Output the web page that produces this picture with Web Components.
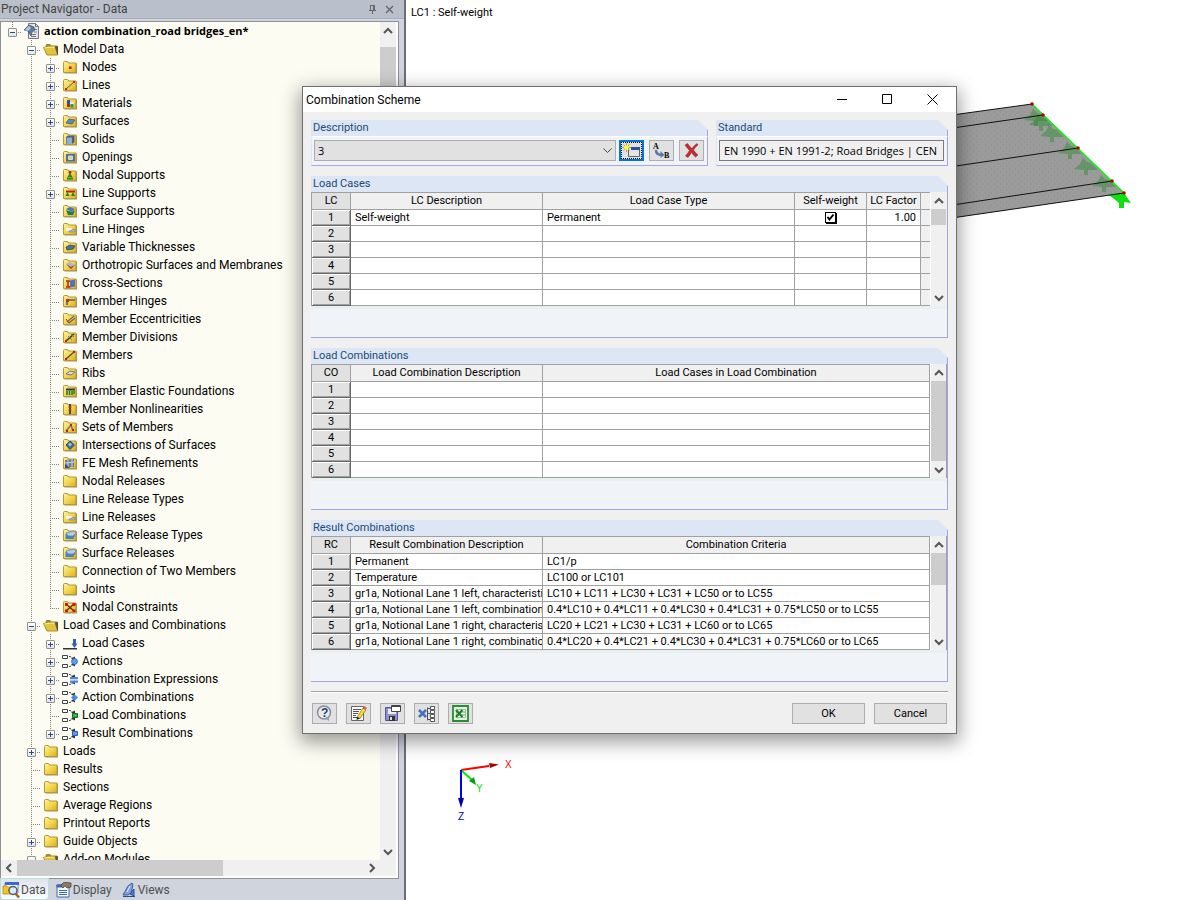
<!DOCTYPE html>
<html lang="en">
<head>
<meta charset="utf-8">
<title>Combination Scheme</title>
<style>
html, body { height: 100%; margin: 0; }
body { font: 12px/16px Roboto, "Liberation Sans", sans-serif; color: #000; background: #fff; overflow: hidden; }
</style>
</head>
<body>
<app-shell></app-shell>
<script>
const define = (name, html, setup) => customElements.define(name, class extends HTMLElement {
  connectedCallback() {
    if (this.shadowRoot) return;
    const root = this.attachShadow({ mode: 'open' });
    root.innerHTML = typeof html === 'function' ? html(this) : html;
    if (setup) setup(this, root);
  }
});

/* ---------- tree icons ---------- */
const folder = `<defs><linearGradient id="f" x1="0" y1="0" x2="1" y2="1"><stop offset="0" stop-color="#fff3a0"/><stop offset=".5" stop-color="#f3d74e"/><stop offset="1" stop-color="#dcae1a"/></linearGradient></defs>
<path d="M1.500 3.500q0-1 1-1h3l1 1.500h7.500v10h-12.500z" fill="#5f5836" opacity=".65" transform="translate(1 .6)"/>
<path d="M1.500 3.500q0-1 1-1h3l1 1.500h7.500v9.500h-12.500z" fill="url(#f)" stroke="#b4983a" stroke-width="1"/>`;
const combo = `<path d="M.5 2.500h5v3h-5zM.5 11.500h5v3h-5z" fill="#fff" stroke="#444"/><path d="M7 3.500q3 0 4 2.500M7 13.500q3 0 4-2.500" fill="none" stroke="#444" stroke-dasharray="2 1"/><path d="M9 5.500l4 2V3.500zM9 11.500l4-2v4z" fill="#333"/>`;
const over = {
  plain: '',
  node: '<rect x="7" y="7.500" width="2.500" height="2.500" fill="#d01010"/>',
  line: '<path d="M4 12l8-7" stroke="#555"/><path d="M3 11h2v2H3zM11 4h2v2h-2z" fill="#d02010"/>',
  material: '<path d="M5 5h3v4H5z" fill="#3050b0"/><path d="M8 7h4v3H8z" fill="#e8e8f0"/><path d="M5 9h3v3H5z" fill="#c02020"/><path d="M8.500 9h3v3.500h-3z" fill="#20a040"/>',
  surface: '<path d="M4 10l3-4 6 1-3 4z" fill="#5d86c4" stroke="#35507a" stroke-width=".7"/>',
  solid: '<path d="M4 6l2-1.500h6.500V11L10 13H4z" fill="#47617f"/><path d="M4.500 6.500H10V13H4.500z" fill="#8fadd0"/>',
  opening: '<path d="M4 5h9v7.500H4z" fill="#4e6e9e"/><path d="M6.500 7h4v3.500h-4z" fill="#f2d65a" stroke="#c8d8ee"/>',
  nsup: '<circle cx="8" cy="5.500" r="1.400" fill="#d01010"/><path d="M8 6l2.500 4h-5zM5 10.500h6v2H5z" fill="#188a28"/>',
  lsup: '<path d="M4 6.500h9" stroke="#c02010" stroke-width="2"/><path d="M5.500 7l2 4h-4zM11 7l2 4H9z" fill="#188a28"/>',
  ssup: '<path d="M4 6l4-2 5 2-3 3z" fill="#4d76b4"/><path d="M4 7l6 2 3-2-2 5H6z" fill="#188050"/>',
  hinge: '<path d="M4 7h6l-1 3H4z" fill="#f4f4f8"/><path d="M7 10l6-2v3H7z" fill="#a8b4c8" stroke="#777" stroke-width=".5"/>',
  thick: '<path d="M4 8l4-2 5 1-2 3-6 1z" fill="#4c6f9c" stroke="#263c58" stroke-width=".7"/>',
  ortho: '<path d="M4 7l4-2 5 3-4 2z" fill="#a7b6dc"/><path d="M4 7l5 3 4-2-4 4z" fill="#a03048"/>',
  cross: '<path d="M8 5.500l5-1v7l-5 1z" fill="#5170c4"/><path d="M4 6h4M6 6v6M4 12h4" stroke="#c02020" stroke-width="1.500"/>',
  mhinge: '<path d="M5 12V7h8" stroke="#777" stroke-width="2" fill="none"/><path d="M4 6h3v3H4z" fill="#c03020"/>',
  ecc: '<path d="M5 11l7-6M7 12l6-5" stroke="#667" stroke-width="1.200"/><path d="M4 8l3 4" stroke="#c03020"/>',
  div: '<path d="M4 12l8-7" stroke="#333" stroke-width="1.600"/><path d="M6 7l4 4M9 5l3 3" stroke="#777"/><path d="M3 11h2v2H3z" fill="#c02010"/>',
  member: '<path d="M4 12l8-7" stroke="#555" stroke-width="1.500"/><path d="M3 11h2v2H3zM11 4h2v2h-2z" fill="#c02010"/>',
  rib: '<path d="M4 9l4-3 5 1-4 3z" fill="#d9d9d9" stroke="#777"/>',
  elastic: '<path d="M4 6.500h9" stroke="#334" stroke-width="2"/><path d="M5 8v4M7.500 8v4M10 8v4M12 8v3" stroke="#108030" stroke-width="1.500"/>',
  nonlin: '<path d="M8 3v10" stroke="#444" stroke-width="2"/><path d="M6.500 6h3M6.500 9h3" stroke="#c04020" stroke-width="1.500"/>',
  sets: '<path d="M4 12l5-6 2 6" stroke="#777" stroke-width="1.500" fill="none"/><path d="M4 11h2v2H4zM8 5h2v2H8zM10 10h2v2h-2z" fill="#c02010"/>',
  inter: '<path d="M8 4l4.500 4-4.500 4.500L4 8z" fill="#3f6aa4" stroke="#2c4a70"/><path d="M8 5.500l2 2-2 2-2-2z" fill="#8fd0d8"/>',
  mesh: '<path d="M3 5l9-1v8H4z" fill="#667c94"/><path d="M4 8l8-1M6 5v8M10 4v8" stroke="#cdd8e4"/><path d="M3 9l5 4H3z" fill="#334c88"/>',
  srel: '<path d="M3.500 7h10l-2 5h-8z" fill="#3f88c8"/><path d="M4 6l8-2 2 2-3 3-5 0z" fill="#b8cce6" stroke="#5b7ca6" stroke-width=".7"/>',
  cons: '<path d="M4 5l8 7M12 5l-8 7" stroke="#522" stroke-width="1.200"/><path d="M3 4h3v3H3zM10.500 4h3v3h-3zM3 10.500h3v2.500H3zM10.500 10.500h3v2.500h-3z" fill="#d01818"/>'
};
const special = {
  open: '<path d="M2.500 5q0-2 1.500-2h3l1.500 1.500H14v8.500H3z" fill="#9c8a3c"/><path d="M.5 6.500q4-1.500 11.500-1l2.500 8.500H4z" fill="#e0c440" stroke="#b09020"/><path d="M1.500 7q4-1.200 10-.8" stroke="#fff0a0" fill="none"/><path d="M12 5.500L14.500 14H15V5z" fill="#5e5632"/>',
  model: '<path d="M4.500.5h7l3 3v12h-10z" fill="#e4e8ec" stroke="#777"/><path d="M11.500.5v3h3M7 11.500h5M7 13.500h5M10 9h3M11 6.500h2" stroke="#777" fill="none"/><path d="M0 7l5-5 5 2 1 3-3 2-1 4-3-5z" fill="#5d7ba4" stroke="#2d4668" stroke-width=".6"/><path d="M1 7l4-4 2 2-3 3z" fill="#b8cce2"/>',
  lcase: '<path d="M1 13.500h14" stroke="#333"/><path d="M1 14.500h14" stroke="#999"/><path d="M11 4h3v6h-3z" fill="#2f62c0"/><path d="M9.500 8.500h6l-3 4.500z" fill="#2f62c0"/>',
  act: combo + '<circle cx="12.500" cy="8.500" r="3" fill="#5d9af0" stroke="#2c5cb0" stroke-width=".7"/>',
  expr: combo + '<path d="M8 6h8v2.200H8zM8 9.500h8v2.200H8z" fill="#4a88e8"/>',
  acomb: combo + '<path d="M12.500 5l3.500 3.500-3.500 3.500L9 8.500z" fill="#4a88e8"/>',
  lcomb: combo + '<path d="M10.500 6.500h5v4h-5z" fill="#20c040" stroke="#107020"/>',
  rcomb: combo + '<path d="M10.500 6.500h5v4h-5z" fill="#5d9af0" stroke="#2c5cb0"/>'
};
const treeIcon = k => `<svg width="16" height="16" viewBox="0 0 16 16" aria-hidden="true">${special[k] || folder + over[k]}</svg>`;

/* ---------- tree ---------- */
define('tree-row', el => {
  const state = el.getAttribute('state');
  const guides = [...(el.getAttribute('guides') || '')].map(g => `<i class="cell ${g === '|' ? 'line' : ''}"></i>`).join('');
  const btn = state === '-' || state === '+'
    ? `<button aria-label="${state === '+' ? 'Expand' : 'Collapse'}"><svg width="7" height="7" viewBox="0 0 7 7"><path d="M1 3.500h5${state === '+' ? 'M3.500 1v5' : ''}" stroke="#2b4a94" stroke-width="1"/></svg></button>` : '';
  return `<style>
:host { display: flex; height: 18px; align-items: stretch; white-space: nowrap; }
:host([bold]) { font: 700 11px/16px "Open Sans", "Noto Sans", sans-serif; }
.cell { flex: none; width: 19px; display: flex; align-items: flex-start; justify-content: center; --dots: repeating-linear-gradient(to bottom, #808080 0 1px, transparent 1px 2px); }
.line { background: var(--dots) 9px 0 / 1px 100% no-repeat; }
.knot { background: var(--dots) 9px 0 / 1px 100% no-repeat, repeating-linear-gradient(to right, #808080 0 1px, transparent 1px 2px) 9px 10px / 10px 1px no-repeat; }
.knot.last { background-size: 1px 10px, 10px 1px; }
button { flex: none; width: 9px; height: 9px; box-sizing: border-box; margin: 6px 0 0; padding: 0; border: 1px solid #919191; border-radius: 1px; background: linear-gradient(#fff, #e4e4e4); display: grid; }
.icon { flex: none; box-sizing: border-box; width: 22px; padding-left: 2px; display: grid; place-items: center start; }
.text { line-height: 18px; }
</style>${guides}<span class="cell knot ${el.hasAttribute('last') ? 'last' : ''}">${btn}</span><span class="icon">${treeIcon(el.getAttribute('icon'))}</span><span class="text"><slot></slot></span>`;
}, el => el.setAttribute('role', 'treeitem'));

const second = `Nodes,node,+;Lines,line,+;Materials,material,+;Surfaces,surface,+;Solids,solid;Openings,opening;Nodal Supports,nsup;Line Supports,lsup,+;Surface Supports,ssup;Line Hinges,hinge;Variable Thicknesses,thick;Orthotropic Surfaces and Membranes,ortho;Cross-Sections,cross;Member Hinges,mhinge;Member Eccentricities,ecc;Member Divisions,div;Members,member;Ribs,rib;Member Elastic Foundations,elastic;Member Nonlinearities,nonlin;Sets of Members,sets;Intersections of Surfaces,inter;FE Mesh Refinements,mesh;Nodal Releases,plain;Line Release Types,plain;Line Releases,hinge;Surface Release Types,srel;Surface Releases,srel;Connection of Two Members,plain;Joints,plain;Nodal Constraints,cons`;
const loads = `Load Cases,lcase,+;Actions,act,+;Combination Expressions,expr,+;Action Combinations,acomb,+;Load Combinations,lcomb;Result Combinations,rcomb,+`;
const rest = `Loads,plain,+;Results,plain;Sections,plain;Average Regions,plain;Printout Reports,plain;Guide Objects,plain,+;Add-on Modules,open,-`;
const rows = (data, guides) => data.split(';').map((r, i, all) => {
  const [t, icon, s = ''] = r.split(',');
  return `<tree-row guides="${guides}" icon="${icon}" state="${s}" ${i === all.length - 1 && guides.length > 1 ? 'last' : ''}>${t}</tree-row>`;
}).join('');
define('project-tree', `<style>
:host { display: block; overflow: hidden; background: #fcfcf3; padding-left: 2px; }
</style>
<tree-row guides="" icon="model" state="-" bold last>action combination_road bridges_en*</tree-row>
<tree-row guides=" " icon="open" state="-">Model Data</tree-row>${rows(second, ' |').replaceAll('guides=" |"', 'guides="_|"').replaceAll('guides="_|"', 'guides=" |"')}
<tree-row guides=" " icon="open" state="-">Load Cases and Combinations</tree-row>${rows(loads, ' |')}${rows(rest, ' ')}`, el => el.setAttribute('role', 'tree'));

/* ---------- scroll bar ---------- */
define('scroll-bar', `<style>
:host { display: flex; flex-direction: column; background: #f0f0f0; --before: 0; --thumb: 1; --after: 0; }
:host([horizontal]) { flex-direction: row; }
button { flex: none; width: 16px; height: 17px; padding: 0; border: 0; background: none; display: grid; place-items: center; }
:host([horizontal]) button { width: 16px; height: 16px; }
:host([horizontal]) svg { transform: rotate(-90deg); }
.a { flex: var(--before) 1 0; } .t { flex: var(--thumb) 1 0; background: #cdcdcd; } .b { flex: var(--after) 1 0; }
svg { fill: none; stroke: #555; stroke-width: 2; }
</style><button aria-label="Scroll back"><svg width="10" height="8" viewBox="0 0 10 8"><path d="M1 6l4-4 4 4"/></svg></button><span class="a"></span><span class="t"></span><span class="b"></span><button aria-label="Scroll forward"><svg width="10" height="8" viewBox="0 0 10 8"><path d="M1 2l4 4 4-4"/></svg></button>`);

/* ---------- navigator ---------- */
define('project-navigator', `<style>
:host { display: flex; flex-direction: column; box-sizing: border-box; background: #cfd4dd; border-right: 2px solid #6c6f76; color: #444; }
header { display: flex; align-items: center; height: 18px; background: #b9c0cb; border-bottom: 1px solid #a9b0bc; padding: 0 6px 0 1px; margin-bottom: 2px; }
h1 { flex: 1; font: inherit; margin: 0; line-height: 16px; }
header button { border: 0; background: none; padding: 0; width: 16px; height: 16px; display: grid; place-items: center; margin-right: 1px; }
.frame { flex: 1; min-height: 0; display: grid; grid-template: minmax(0, 1fr) 16px / minmax(0, 1fr) 16px; margin-right: 5px; padding: 0 2px 2px 0; background: #fff; border: 1px solid #8c8f96; }
project-tree { color: #000; }
.v { --before: 1; --thumb: 80; --after: 14; } .h { --thumb: 205; --after: 140; }
.corner { background: #f0f0f0; }
nav { display: flex; height: 21px; align-items: flex-start; gap: 6px; padding-left: 1px; }
nav button { font: inherit; color: #505050; height: 20px; display: flex; align-items: center; gap: 1px; padding: 1px 2px 0 1px; border: 0; background: none; }
nav button[aria-selected=true] { background: linear-gradient(#e0e4ea, #fafcfd); box-shadow: 0 0 0 1px #b9dfe6; border-radius: 0 0 3px 3px; }
</style>
<header><h1>Project Navigator - Data</h1>
<button aria-label="Pin"><svg width="9" height="10" viewBox="0 0 9 10" fill="none" stroke="#666"><path d="M2.500 1v5M1 6.500h7M6.500 1v5M2 1.500h5M5.500 1v5M4.500 7v3"/></svg></button>
<button aria-label="Close"><svg width="9" height="9" viewBox="0 0 9 9" fill="none" stroke="#666" stroke-width="1.400"><path d="M1 1l7 7M8 1l-7 7"/></svg></button></header>
<div class="frame"><project-tree></project-tree><scroll-bar class="v"></scroll-bar><scroll-bar class="h" horizontal></scroll-bar><span class="corner"></span></div>
<nav role="tablist">
<button role="tab" aria-selected="true"><svg width="18" height="18" viewBox="0 0 18 18"><path d="M3 2h13v10H3z" fill="#fff" stroke="#6d8fd8"/><path d="M3 1h14v3H3z" fill="#3a6ad8"/><path d="M1 5h4l1 1h3v7H1z" fill="#f3c81e" stroke="#a8801c" stroke-width=".7"/><circle cx="11" cy="9.500" r="4" fill="#d9ecfa" stroke="#505a68" stroke-width="1.500"/><path d="M13.500 12.500l3.500 4" stroke="#a86020" stroke-width="2.500"/></svg>Data</button>
<button role="tab" aria-selected="false"><svg width="17" height="18" viewBox="0 0 17 18"><path d="M2 4h12v12H2z" fill="#f6f8fc" stroke="#3d68b8"/><path d="M1.500 3.500h6v3h-6z" fill="#3d68b8"/><path d="M4 9.500h8M4 11.500h8M4 13.500h8" stroke="#3d68b8"/><path d="M6 5q1-4 5-3.500L16 2v4l-4 1-2-2-2 2z" fill="#8a7a68" stroke="#443a30" stroke-width=".7"/></svg>Display</button>
<button role="tab" aria-selected="false"><svg width="16" height="18" viewBox="0 0 16 18"><path d="M2 15.500h12M9 13l4-5v7z" fill="#5b80cc" stroke="#2a4a94"/><path d="M2 14l5-9 4-3 1 2-2 8-3 2z" fill="#7ea2e4" stroke="#27458c" stroke-width=".8"/><path d="M6 11l3-6" stroke="#e4eefc"/></svg>Views</button>
</nav>`);

/* ---------- dialog parts ---------- */
define('group-panel', `<style>
:host { display: flex; flex-direction: column; font-size: 11px; }
.head { height: 16px; padding-left: 2px; background: #dce6f4; color: #1d4a78; border-right: 1px solid #a5a5e8; clip-path: polygon(0 0, calc(100% - 10px) 0, 100% 10px, 100% 100%, 0 100%); line-height: 16px; }
.body { flex: 1; border: solid #a5a5e8; border-width: 0 1px 1px 0; background: #f0f4f8; }
:host([form]) .body { border-top: 1px solid #fff; border-left: 1px solid #dce6f4; padding: 3px 3px 4px 2px; display: flex; gap: 5px; align-items: center; }
</style><div class="head"><slot name="title"></slot></div><div class="body"><slot></slot></div>`);

define('tool-button', el => `<style>
:host { display: inline-flex; }
button { width: 25px; height: 21px; box-sizing: border-box; padding: 0; border: 1px solid #adadad; background: #e1e1e1; display: grid; place-items: center; }
:host([focused]) button { border: 2px solid #0078d7; outline: 1px dotted #000; outline-offset: -3px; }
</style><button aria-label="${el.getAttribute('label')}"><slot></slot></button>`);

define('push-button', `<style>
:host { display: inline-flex; width: 73px; }
button { flex: 1; height: 21px; box-sizing: border-box; padding: 0; border: 1px solid #adadad; background: #e1e1e1; font: 11px/16px Roboto, "Liberation Sans", sans-serif; }
</style><button><slot></slot></button>`);

const grids = {
  LC: { cols: [['LC', 39], ['LC Description', 192], ['Load Case Type', 0], ['Self-weight', 72], ['LC Factor', 54], ['', 9]],
    rows: [['Self-weight', 'Permanent', '@', '1.00', '']], bar: '--thumb:16;--after:64' },
  CO: { cols: [['CO', 39], ['Load Combination Description', 192], ['Load Cases in Load Combination', 0]], rows: [], bar: '' },
  RC: { cols: [['RC', 39], ['Result Combination Description', 192], ['Combination Criteria', 0]],
    rows: [['Permanent', 'LC1/p'], ['Temperature', 'LC100 or LC101'],
      ['gr1a, Notional Lane 1 left, characteristi', 'LC10 + LC11 + LC30 + LC31 + LC50 or to LC55'],
      ['gr1a, Notional Lane 1 left, combination', '0.4*LC10 + 0.4*LC11 + 0.4*LC30 + 0.4*LC31 + 0.75*LC50 or to LC55'],
      ['gr1a, Notional Lane 1 right, characteris', 'LC20 + LC21 + LC30 + LC31 + LC60 or to LC65'],
      ['gr1a, Notional Lane 1 right, combinatio', '0.4*LC20 + 0.4*LC21 + 0.4*LC30 + 0.4*LC31 + 0.75*LC60 or to LC65']], bar: '--thumb:32;--after:48' }
};
define('data-grid', el => {
  const g = grids[el.getAttribute('kind')];
  const cell = (v, i) => v === '@' ? '<td class="tick"><label><input type="checkbox" checked aria-label="Self-weight"><svg width="11" height="11" viewBox="0 0 11 11"><path d="M2.500 5l2 2.500 4-5" fill="none" stroke="#000" stroke-width="2"/></svg></label></td>'
    : `<td${v === '1.00' ? ' class="num"' : g.cols[i + 1][1] === 9 ? ' class="stub"' : ''}>${v}</td>`;
  return `<style>
:host { display: grid; grid-template-columns: minmax(0, 1fr) auto; background: #f0f0f0; border-bottom: 3px solid #e8f0f0; }
table { width: 100%; table-layout: fixed; border-collapse: separate; border-spacing: 0; border: solid #a0a0a0; border-width: 1px 0 0 1px; background: #fff; }
th, td { box-sizing: border-box; height: 16px; padding: 0; border: solid #a0a0a0; border-width: 0 1px 1px 0; font-weight: 400; line-height: 14px; white-space: nowrap; overflow: hidden; }
thead th { height: 17px; background: #f0f0f0; line-height: 15px; vertical-align: top; }
thead th:first-child { background: #e1e1e1; }
td { padding: 1px 0 0 4px; }
tbody th { background: #e1e1e1; border-color: #696969; box-shadow: inset 1px 1px #fff, inset -1px -1px #a0a0a0; }
.num { text-align: right; padding-right: 4px; }
.stub { background: #f0f0f0; border-right: 0; }
.tick { padding: 0; text-align: center; }
.tick label { display: inline-grid; vertical-align: top; margin-top: 1px; }
.tick input, .tick svg { grid-area: 1 / 1; }
.tick svg { pointer-events: none; }
input { appearance: none; width: 11px; height: 11px; box-sizing: border-box; margin: 0; border: 1px solid #000; box-shadow: 1px 1px #000; background: #fff; }
scroll-bar { width: 15px; border-left: 1px solid #fff; border-right: 1px solid ${el.getAttribute('kind') === 'LC' ? '#f0f0f0' : '#a0a0a0'}; box-sizing: border-box; width: 17px; ${g.bar} }
</style><table><colgroup>${g.cols.map(c => `<col${c[1] ? ` style="width:${c[1]}px"` : ''}>`).join('')}</colgroup>
<thead><tr>${g.cols.map(c => `<th scope="col"${c[1] === 9 ? ' class="stub"' : ''}>${c[0]}</th>`).join('')}</tr></thead>
<tbody>${[0, 1, 2, 3, 4, 5].map(n => `<tr><th scope="row">${n + 1}</th>${(g.rows[n] || g.cols.slice(1).map(() => '')).map(cell).join('')}</tr>`).join('')}</tbody></table><scroll-bar></scroll-bar>`;
});

define('scheme-dialog', `<style>
:host { display: block; box-sizing: border-box; border: 1px solid #707070; background: #f0f0f0; box-shadow: 0 6px 18px 2px rgba(0,0,0,.4); }
header { display: flex; align-items: center; height: 25px; padding: 0 1px 0 3px; background: #fff; }
h2 { flex: 1; margin: 0; font: inherit; }
header button { width: 45px; height: 25px; padding: 0; border: 0; background: none; display: grid; place-items: center; }
header svg { fill: none; stroke: #000; }
form { padding: 8px 8px 9px; display: flex; flex-direction: column; }
.top { display: flex; gap: 8px; margin-bottom: 10px; }
.top group-panel:first-child { flex: 1; } .top group-panel:last-child { width: 232px; }
.pick { flex: 1; display: grid; margin-right: -2px; }
.pick > * { grid-area: 1 / 1; }
.pick svg { justify-self: end; align-self: center; margin-right: 4px; pointer-events: none; }
select, input { height: 21px; box-sizing: border-box; margin: 0; border: 1px solid #adadad; border-radius: 0; background: #e1e1e1; appearance: none; font: 11px/16px "Open Sans", "Noto Sans", sans-serif; padding: 0 3px; color: #000; }
input { flex: 1; min-width: 0; background: #f0f0f0; border-color: #7a7a7a; padding-left: 4px; }
.grid { margin-bottom: 10px; }
.grid.last { margin-bottom: 9px; }
.space { height: 28px; }
footer { border-top: 1px solid #a0a0a0; box-shadow: inset 0 1px #fff; padding: 11px 1px 0; display: flex; gap: 9px; }
footer i { flex: 1; }
</style>
<header><h2>Combination Scheme</h2>
<button aria-label="Minimize"><svg width="11" height="11" viewBox="0 0 11 11"><path d="M0 5.500h10"/></svg></button>
<button aria-label="Maximize"><svg width="11" height="11" viewBox="0 0 11 11"><path d="M.5.5h9v9h-9z"/></svg></button>
<button aria-label="Close"><svg width="11" height="11" viewBox="0 0 11 11"><path d="M.5.5l10 10M10.500.5l-10 10"/></svg></button></header>
<form onsubmit="return false">
<div class="top">
<group-panel form><label slot="title" for="desc">Description</label>
<span class="pick"><select id="desc"><option>3</option></select><svg width="9" height="6" viewBox="0 0 9 6" fill="none" stroke="#444"><path d="M.5.5l4 4 4-4"/></svg></span>
<tool-button label="New" focused><svg width="19" height="15" viewBox="0 0 19 15"><path d="M6.500 4.500h11v9h-11z" fill="#e4e4e4" stroke="#666"/><path d="M9 4h9v3H9z" fill="#2f4f98"/><path d="M4.500 0v9M0 4.500h9M1.500 1.500l6 6M7.500 1.500l-6 6" stroke="#b8b010"/><circle cx="4.500" cy="4.500" r="2.200" fill="#ffff50"/></svg></tool-button>
<tool-button label="Rename"><svg width="19" height="17" viewBox="0 0 19 17"><text x="1" y="7" font-family="Liberation Serif" font-weight="700" font-size="8">A</text><text x="12" y="16" font-family="Liberation Serif" font-weight="700" font-size="8">B</text><path d="M4 8q0 5 6 5" fill="none" stroke="#5a78ac" stroke-width="2.500"/><path d="M8.500 9l4 4-4 3z" fill="#5a78ac"/></svg></tool-button>
<tool-button label="Delete"><svg width="15" height="15" viewBox="0 0 15 15"><path d="M1 2l2.500-1.500Q6 4 8 5.500 10 2.500 13 .5L14 2q-3 2-4.500 5 2 3 4.500 5l-2.500 2Q9 12 7.500 9.500 6 12 4 14.500L1.500 13Q4 10 5.500 7.500 3 5 1 2z" fill="#c8282c" stroke="#8a3a3c" stroke-width=".6"/></svg></tool-button>
</group-panel>
<group-panel form><label slot="title" for="std">Standard</label><input id="std" readonly value="EN 1990 + EN 1991-2; Road Bridges | CEN"></group-panel>
</div>
<group-panel class="grid"><span slot="title">Load Cases</span><data-grid kind="LC"></data-grid><div class="space"></div></group-panel>
<group-panel class="grid"><span slot="title">Load Combinations</span><data-grid kind="CO"></data-grid><div class="space"></div></group-panel>
<group-panel class="grid last"><span slot="title">Result Combinations</span><data-grid kind="RC"></data-grid><div class="space"></div></group-panel>
<footer>
<tool-button label="Help"><svg width="17" height="17" viewBox="0 0 17 17"><circle cx="8" cy="7.500" r="6.500" fill="#e6e9ee" stroke="#8a8f98" stroke-width="1.500"/><path d="M8 13l5-1v4z" fill="#9a9fa8"/><text x="5" y="12" font-family="Liberation Sans" font-weight="700" font-size="12" fill="#2a3e70">?</text></svg></tool-button>
<tool-button label="Edit"><svg width="17" height="17" viewBox="0 0 17 17"><path d="M1.500 1.500h12v14h-12z" fill="#fff" stroke="#666"/><path d="M3 4.500h8M3 6.500h6M3 8.500h5M3 10.500h3M3 12.500h8" stroke="#555"/><path d="M7 12l6-9 3 2-6 8.500z" fill="#f2d838" stroke="#7a6010" stroke-width=".6"/><path d="M13 3l1.500-2 2.500 2-1.500 2z" fill="#d06050"/><path d="M7 12l3 1.500L6.500 15z" fill="#222"/></svg></tool-button>
<tool-button label="Save"><svg width="17" height="17" viewBox="0 0 17 17"><path d="M1.500 2.500h12v13h-12z" fill="#8f8fd0" stroke="#5656a0"/><path d="M4 4h8v5H4z" fill="#eee"/><path d="M5 11h6v5H5z" fill="#333"/><path d="M6 12h2v3H6z" fill="#ddd"/><path d="M7.500.5h9v6h-9z" fill="#fff" stroke="#444"/><path d="M7 1h10v1H7z" fill="#444"/></svg></tool-button>
<tool-button label="Expand scheme"><svg width="18" height="16" viewBox="0 0 18 16"><path d="M1 4l7 7M8 4l-7 7" stroke="#4470b8" stroke-width="2.500"/><path d="M9.500 1.500v13M9.500 2.500H12M9.500 7.500H12M9.500 13.500H12" stroke="#555" fill="none"/><path d="M12.500.5h4v3h-4zM12.500 4.500h4v3h-4zM12.500 8.500h4v3h-4zM12.500 12.500h4v3h-4z" fill="#fff" stroke="#555"/></svg></tool-button>
<tool-button label="Export to Excel"><svg width="17" height="17" viewBox="0 0 17 17"><path d="M1 1h15v15H1z" fill="#e2f2e2" stroke="#2e8a34" stroke-width="1.800"/><path d="M4.500 4.500h9v8h-9z" fill="#fff" stroke="#8fc493"/><path d="M10 7h3M10 10h3" stroke="#5aa460"/><path d="M4 5l6.500 7M10.500 5l-6.500 7" stroke="#1f7a28" stroke-width="2.200"/></svg></tool-button>
<i></i><push-button>OK</push-button><push-button>Cancel</push-button>
</footer>
</form>`);

/* ---------- model view ---------- */
const support = (x, y) => `<path transform="translate(${x} ${y})" opacity=".4" d="M-3-8l4 4 4 1 7 7H2v5h-4V4l-10-1 6-5z" fill="#1c8a20"/>`;
define('model-view', `<style>
:host { display: block; overflow: hidden; background: #fff; }
p { margin: 5px 0 0 5px; font-size: 11px; line-height: 16px; }
svg { display: block; }
</style><p>LC1 : Self-weight</p>
<svg width="794" height="840" viewBox="406 21 794 840" role="img" aria-label="Model">
<defs><pattern id="dots" width="6" height="6" patternUnits="userSpaceOnUse"><path d="M1 1h1M4 4h1" stroke="#8c8c8c"/></pattern></defs>
<path d="M800 136L1032 104 1124 193 800 240z" fill="#9b9b9b"/><path d="M800 136L1032 104 1124 193 800 240z" fill="url(#dots)"/>
${support(1036, 117)}${support(1041, 122)}${support(1052, 133)}${support(1070, 150)}${support(1086, 166)}${support(1104, 183)}
<path d="M1108 194l16-1 7 10-7-1v6h-5v-5z" fill="#10e010"/>
<path d="M800 136L1032 104M800 150L1043 115M800 189L1078 148M800 228L1112 181M800 240L1124 193" stroke="#111" fill="none"/>
<path d="M1032 104L1124 193" stroke="#10f010" stroke-width="1.500"/>
<g fill="#a00808"><circle cx="1032" cy="104" r="1.800"/><circle cx="1043" cy="115" r="1.800"/><circle cx="1078" cy="148" r="1.800"/><circle cx="1112" cy="181" r="1.800"/><circle cx="1124" cy="193" r="1.800"/></g>
<path d="M461 770l28-4" stroke="#f00" stroke-width="2"/><path d="M489 763l10 1.500-9 3.500z" fill="#a00"/>
<path d="M461 770l11 10" stroke="#0e0" stroke-width="2"/><path d="M469 781l5-4 2 8z" fill="#0a9a20"/>
<path d="M461 770v30" stroke="#00f" stroke-width="2"/><path d="M458 798h6l-3 10z" fill="#00a"/>
<g font-family="Liberation Sans" font-size="10"><text x="505" y="768" fill="#f00">X</text><text x="476" y="792" fill="#0d0">Y</text><text x="458" y="820" fill="#00c">Z</text></g>
</svg>`);

define('app-shell', `<style>
:host { display: flex; height: 100vh; position: relative; overflow: hidden; }
project-navigator { flex: none; width: 406px; }
model-view { flex: 1; min-width: 0; }
scheme-dialog { position: absolute; left: 302px; top: 86px; width: 655px; }
</style><project-navigator></project-navigator><model-view></model-view><scheme-dialog></scheme-dialog>`);
</script>
</body>
</html>
